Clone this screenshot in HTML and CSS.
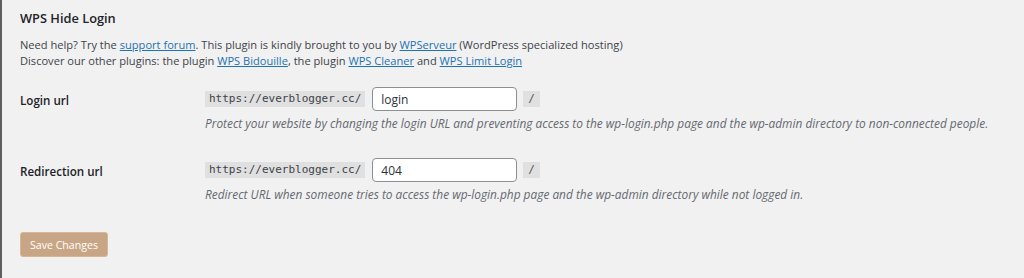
FILE: index.html
```html
<!DOCTYPE html>
<html lang="en">
<head>
  <meta charset="UTF-8" />
  <title>WPS Hide Login</title>
  <link rel="stylesheet" href="styles.css">
</head>
<body>
  <div class="wrap">
    <h2>WPS Hide Login</h2>
    <p class="intro">
      Need help? Try the <a href="#">support forum</a>. This plugin is kindly brought to you by <a href="#">WPServeur</a> (WordPress specialized hosting)<br>
      Discover our other plugins: the plugin <a href="#">WPS Bidouille</a>, the plugin <a href="#">WPS Cleaner</a> and <a href="#">WPS Limit Login</a>
    </p>

    <div class="form-row">
      <div class="row-label">Login url</div>
      <div class="row-field">
        <div class="url-line">
          <code>https://everblogger.cc/</code>
          <input type="text" value="login">
          <code class="slash">/</code>
        </div>
        <p class="description">Protect your website by changing the login URL and preventing access to the wp-login.php page and the wp-admin directory to non-connected people.</p>
      </div>
    </div>

    <div class="form-row">
      <div class="row-label">Redirection url</div>
      <div class="row-field">
        <div class="url-line">
          <code>https://everblogger.cc/</code>
          <input type="text" value="404">
          <code class="slash">/</code>
        </div>
        <p class="description">Redirect URL when someone tries to access the wp-login.php page and the wp-admin directory while not logged in.</p>
      </div>
    </div>

    <button type="button" class="save-btn">Save Changes</button>
  </div>
</body>
</html>
```

FILE: styles.css
```css
/* WordPress admin look */
body {
  margin: 0;
  background: #f1f1f1;
  color: #3c434a;
  font-family: "Open Sans", "Noto Sans", sans-serif;
  font-size: 11.1px;
  min-height: 278px;
  border-left: 2px solid #5f5f5f;
  box-sizing: border-box;
}
.wrap {
  padding: 9px 18px 0;
}
h2 {
  font-size: 12.8px;
  line-height: 18px;
  font-weight: 600;
  color: #1d2327;
  margin: 0 0 10px;
}
.intro {
  margin: 0 0 18px;
  line-height: 16px;
}
a {
  color: #2271b1;
  text-decoration: underline;
}
.form-row {
  display: flex;
  margin-bottom: 27px;
}
.row-label {
  width: 185px;
  flex-shrink: 0;
  font-size: 11.6px;
  line-height: 16px;
  font-weight: 600;
  color: #1d2327;
  padding-top: 6px;
}
.url-line {
  display: flex;
  align-items: center;
  gap: 7px;
}
code {
  font-family: "DejaVu Sans Mono", monospace;
  font-size: 11px;
  background: #e0e0e0;
  color: #3c434a;
  padding: 2px 4px;
  line-height: 12px;
}
.slash {
  margin-left: -1px;
  padding: 2px 5px;
  color: #50575e;
}
input[type="text"] {
  width: 145px;
  height: 24px;
  box-sizing: border-box;
  border: 1px solid #8c8f94;
  border-radius: 4px;
  background: #fff;
  color: #2c3338;
  font-family: inherit;
  font-size: 12px;
  padding: 0 8px;
}
.description {
  margin: 4px 0 0;
  line-height: 16px;
  font-style: italic;
  color: #646970;
  font-size: 11.9px;
}
.save-btn {
  margin-top: 3px;
  background: #c8a685;
  color: #fff;
  border: 1px solid #d4b799;
  border-radius: 3px;
  font-family: inherit;
  font-size: 10.6px;
  padding: 0 9px;
  height: 25px;
}
```
